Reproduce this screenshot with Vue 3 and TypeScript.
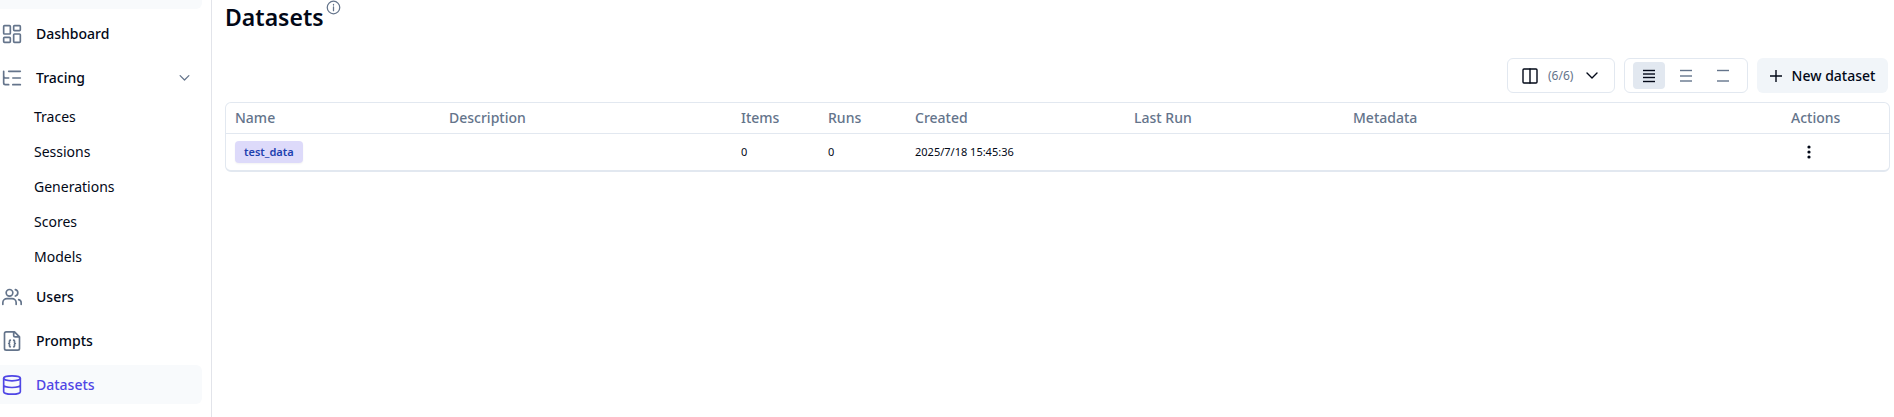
<script setup lang="ts">
import { ref } from 'vue'

type Density = 'small' | 'medium' | 'large'

const traceLinks: string[] = ['Traces', 'Sessions', 'Generations', 'Scores', 'Models']
const columns: string[] = ['Name', 'Description', 'Items', 'Runs', 'Created', 'Last Run', 'Metadata', 'Actions']
const rows = [{ name: 'test_data', items: 0, runs: 0, created: '2025/7/18 15:45:36' }]

const densities: { id: Density; label: string; lines: number[] }[] = [
  { id: 'small', label: 'Small rows', lines: [1.5, 5, 8.5, 12.5] },
  { id: 'medium', label: 'Medium rows', lines: [1.5, 7, 12] },
  { id: 'large', label: 'Large rows', lines: [1.5, 12] },
]
const density = ref<Density>('small')
const tracingOpen = ref(true)
</script>

<template>
  <div class="app">
    <aside class="sidebar">
      <nav class="nav" aria-label="Main">
        <a href="#" class="item previous" aria-label="Home"></a>
        <a href="#" class="item">
          <svg class="icon" viewBox="0 0 24 24"><rect x="2" y="2" width="8" height="10" rx="1" /><rect x="14" y="2" width="8" height="6" rx="1" /><rect x="14" y="12" width="8" height="10" rx="1" /><rect x="2" y="16" width="8" height="6" rx="1" /></svg>
          <span>Dashboard</span>
        </a>
        <button type="button" class="item" :aria-expanded="tracingOpen" @click="tracingOpen = !tracingOpen">
          <svg class="icon" viewBox="0 0 24 24"><path d="M22 12h-9M22 4H8M22 20h-9M2 4v6c0 1.100.9 2 2 2h4M2 10v8c0 1.100.9 2 2 2h4" /></svg>
          <span>Tracing</span>
          <svg class="chevron" viewBox="0 0 24 24"><path d="m5 9 7 7 7-7" /></svg>
        </button>
        <div v-if="tracingOpen" class="sub">
          <a v-for="link in traceLinks" :key="link" href="#" class="sub-item">{{ link }}</a>
        </div>
        <a href="#" class="item">
          <svg class="icon" viewBox="0 0 24 24"><path d="M17 21v-2a5 5 0 0 0-5-5H6a5 5 0 0 0-5 5v2M23 21v-2a4 4 0 0 0-3-3.870M16 3.130a4 4 0 0 1 0 7.750" /><circle cx="9" cy="7" r="4" /></svg>
          <span>Users</span>
        </a>
        <a href="#" class="item">
          <svg class="icon" viewBox="0 0 24 24"><path d="M15 1H5a2 2 0 0 0-2 2v18a2 2 0 0 0 2 2h14a2 2 0 0 0 2-2V7zM14 1v4a2 2 0 0 0 2 2h5M10 11a1 1 0 0 0-1 1v2a1 1 0 0 1-1 1 1 1 0 0 1 1 1v2a1 1 0 0 0 1 1M14 19a1 1 0 0 0 1-1v-2a1 1 0 0 1 1-1 1 1 0 0 1-1-1v-2a1 1 0 0 0-1-1" /></svg>
          <span>Prompts</span>
        </a>
        <a href="#" class="item active" aria-current="page">
          <svg class="icon" viewBox="0 0 24 24"><ellipse cx="12" cy="4" rx="10" ry="3" /><path d="M2 4v16c0 1.700 4.500 3 10 3s10-1.300 10-3V4M2 12c0 1.700 4.500 3 10 3s10-1.300 10-3" /></svg>
          <span>Datasets</span>
        </a>
      </nav>
    </aside>

    <main class="main">
      <header class="header">
        <h1>Datasets</h1>
        <svg class="info" viewBox="0 0 24 24"><circle cx="12" cy="12" r="10" /><path d="M12 17v-6M12 7v1" /></svg>
      </header>

      <div class="toolbar">
        <button type="button" class="columns-button" aria-label="Columns (6/6)">
          <svg class="glyph" viewBox="0 0 16 16"><rect x="1" y="1" width="14" height="14" rx="1" /><path d="M8 1v14" /></svg>
          <span class="count">(6/6)</span>
          <svg class="down" viewBox="0 0 12 12"><path d="m1 3 5 5 5-5" /></svg>
        </button>
        <div class="density" role="group" aria-label="Row height">
          <button
            v-for="d in densities"
            :key="d.id"
            type="button"
            :class="{ selected: density === d.id }"
            :aria-label="d.label"
            :aria-pressed="density === d.id"
            @click="density = d.id"
          >
            <svg viewBox="0 0 12 14"><path v-for="y in d.lines" :key="y" :d="`M0 ${y}h12`" /></svg>
          </button>
        </div>
        <button type="button" class="new-button">
          <svg class="plus" viewBox="0 0 12 12"><path d="M6 0v12M0 6h12" /></svg>
          <span>New dataset</span>
        </button>
      </div>

      <div class="table-wrap">
        <table>
          <colgroup>
            <col v-for="c in columns" :key="c" :class="'col-' + c.toLowerCase().replace(' ', '-')" />
          </colgroup>
          <thead>
            <tr><th v-for="c in columns" :key="c" scope="col">{{ c }}</th></tr>
          </thead>
          <tbody>
            <tr v-for="row in rows" :key="row.name">
              <td><a href="#" class="badge">{{ row.name }}</a></td>
              <td></td>
              <td>{{ row.items }}</td>
              <td>{{ row.runs }}</td>
              <td>{{ row.created }}</td>
              <td></td>
              <td></td>
              <td>
                <button type="button" class="more" aria-label="Open menu">
                  <svg viewBox="0 0 4 14"><circle cx="2" cy="2" r="1.600" /><circle cx="2" cy="7" r="1.600" /><circle cx="2" cy="12" r="1.600" /></svg>
                </button>
              </td>
            </tr>
          </tbody>
        </table>
      </div>
    </main>
  </div>
</template>

<style>
body {
  background: #fff;
}
</style>

<style scoped>
.app {
  display: flex;
  min-height: 100vh;
  overflow: hidden;
  color: #020817;
  font-family: 'Noto Sans', 'Open Sans', sans-serif;
  font-size: 14px;
  line-height: 20px;
}
.app * {
  box-sizing: border-box;
}
button {
  margin: 0;
  padding: 0;
  border: 0;
  background: none;
  color: inherit;
  font: inherit;
  cursor: pointer;
}
a {
  color: inherit;
  text-decoration: none;
}
svg {
  flex: none;
  fill: none;
  stroke: currentColor;
  stroke-width: 2;
  stroke-linecap: round;
  stroke-linejoin: round;
}
.sidebar {
  flex: none;
  width: 212px;
  border-right: 1px solid #e2e4ea;
}
.nav {
  display: flex;
  flex-direction: column;
  gap: 5px;
  padding-right: 9px;
}
.item {
  display: flex;
  align-items: center;
  gap: 14px;
  height: 39px;
  padding: 0 10px 0 2px;
  border-radius: 0 6px 6px 0;
  font-weight: 500;
}
.previous {
  height: 9px;
  border-radius: 0 0 6px 0;
  background: #f8fafc;
}
.icon {
  width: 20px;
  height: 20px;
  color: #64748b;
}
.chevron {
  width: 15px;
  height: 15px;
  margin-left: auto;
  color: #64748b;
}
.active {
  background: #f8fafc;
  color: #4f46e5;
}
.active .icon {
  color: inherit;
}
.sub {
  display: flex;
  flex-direction: column;
  gap: 5px;
  padding-left: 34px;
}
.sub-item {
  height: 30px;
  line-height: 30px;
}
.main {
  flex: 1;
  min-width: 0;
  padding: 0 4px 0 13px;
}
.header {
  display: flex;
  align-items: flex-start;
  gap: 2px;
  height: 58px;
}
h1 {
  margin: 0;
  font-size: 23px;
  line-height: 34px;
  font-weight: 600;
}
.info {
  width: 15px;
  height: 15px;
  color: #64748b;
}
.toolbar {
  display: flex;
  justify-content: flex-end;
  gap: 9px;
  padding: 0 2px 9px 0;
}
.columns-button,
.density {
  display: flex;
  align-items: center;
  height: 35px;
  border: 1px solid #e2e8f0;
  border-radius: 6px;
}
.columns-button {
  width: 108px;
  padding: 0 16px 0 14px;
  gap: 10px;
}
.glyph {
  width: 16px;
  height: 16px;
}
.glyph,
.down {
  stroke-width: 1.4;
}
.count {
  flex: 1;
  color: #64748b;
  font-size: 12px;
  text-align: left;
}
.down {
  width: 12px;
  height: 12px;
}
.density {
  gap: 5px;
  padding: 0 8px;
}
.density button {
  display: flex;
  align-items: center;
  justify-content: center;
  width: 32px;
  height: 27px;
  border-radius: 4px;
  color: #64748b;
}
.density button.selected {
  background: #e2e8f0;
  color: #020817;
}
.density svg {
  width: 12px;
  height: 14px;
  stroke-width: 1.4;
  stroke-linecap: butt;
}
.new-button {
  display: flex;
  align-items: center;
  justify-content: center;
  gap: 10px;
  width: 131px;
  height: 35px;
  border-radius: 6px;
  background: #f1f5f9;
  font-weight: 500;
}
.plus {
  width: 12px;
  height: 12px;
  stroke-width: 1.4;
}
.table-wrap {
  overflow: hidden;
  border: 1px solid #e2e8f0;
  border-bottom-width: 2px;
  border-radius: 6px;
}
table {
  width: 100%;
  border-collapse: collapse;
  table-layout: fixed;
}
th,
td {
  padding: 0 9px;
  text-align: left;
}
th {
  height: 30px;
  border-bottom: 1px solid #e2e8f0;
  color: #64748b;
  font-weight: 500;
}
td {
  height: 37px;
  font-size: 11px;
}
.col-name {
  width: 214px;
}
.col-description {
  width: 292px;
}
.col-items,
.col-runs {
  width: 87px;
}
.col-created,
.col-last-run {
  width: 219px;
}
.col-actions {
  width: 107px;
}
.badge {
  display: inline-block;
  padding: 0 9px;
  border-radius: 4px;
  background: #dddafa;
  box-shadow: 0 1px 2px rgba(0, 0, 0, 0.05);
  color: #1e40af;
  line-height: 22px;
  font-weight: 600;
}
.more {
  display: flex;
  align-items: center;
  justify-content: center;
  width: 36px;
  height: 28px;
}
.more svg {
  width: 4px;
  height: 14px;
  fill: currentColor;
  stroke: none;
}
</style>
